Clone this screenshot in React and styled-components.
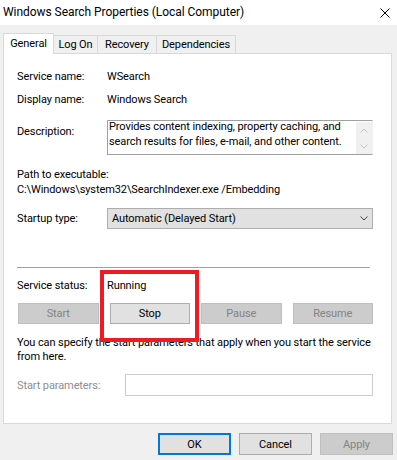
import React from "react";
import styled, { createGlobalStyle } from "styled-components";

const GlobalStyle = createGlobalStyle`
  html, body {
    margin: 0;
    padding: 0;
    background: #f0f0f0;
  }
  body {
    font-family: Roboto, "Noto Sans", "Liberation Sans", sans-serif;
    font-size: 11px;
    letter-spacing: -0.1px;
    color: #000;
  }
`;

const Dialog = styled.div`
  width: 397px;
  height: 460px;
  overflow: hidden;
  background: #f0f0f0;
  display: flex;
  flex-direction: column;
`;

const TitleBar = styled.div`
  height: 25px;
  flex: none;
  background: #fff;
  display: flex;
  align-items: center;
  justify-content: space-between;
  padding: 0 7px 0 3px;
  span {
    font-size: 12px;
    letter-spacing: -0.05px;
    padding-bottom: 1px;
  }
`;

const TabStrip = styled.div`
  margin-top: 8px;
  height: 20px;
  display: flex;
  align-items: flex-end;
  padding-left: 3px;
`;

const Tab = styled.div`
  box-sizing: border-box;
  width: ${p => p.$w}px;
  height: ${p => (p.$active ? 21 : 18)}px;
  margin-bottom: ${p => (p.$active ? -1 : 0)}px;
  margin-left: ${p => (p.$first ? 0 : -1)}px;
  border: 1px solid #d9d9d9;
  border-bottom: none;
  background: ${p => (p.$active ? "#fff" : "#f0f0f0")};
  display: flex;
  align-items: center;
  justify-content: center;
  padding-bottom: ${p => (p.$active ? 2 : 0)}px;
  position: relative;
  z-index: ${p => (p.$active ? 2 : 0)};
`;

const Panel = styled.div`
  box-sizing: border-box;
  margin: 0 5px 0 3px;
  height: 371px;
  border: 1px solid #d9d9d9;
  background: #fff;
  padding: 15px 18px 0 13px;
  position: relative;
  display: flex;
  flex-direction: column;
`;

const Row = styled.div`
  display: flex;
  align-items: ${p => p.$align || "center"};
  margin-top: ${p => p.$mt || 0}px;
  line-height: 15px;
`;

const Label = styled.div`
  width: ${p => p.$w || 90}px;
  flex: none;
  color: ${p => (p.$disabled ? "#8d8d8d" : "#000")};
  padding-top: ${p => p.$pt || 0}px;
`;

const TextLine = styled.div`
  line-height: 15px;
  margin-top: ${p => p.$mt || 0}px;
`;

const DescBox = styled.div`
  flex: 1;
  box-sizing: border-box;
  height: 35px;
  border: 1px solid #a0a0a0;
  border-right-color: #f0f0f0;
  display: flex;
`;

const DescText = styled.div`
  flex: 1;
  line-height: 14.5px;
  padding-left: 1px;
  margin-top: -1px;
`;

const ScrollBar = styled.div`
  width: 16px;
  margin-top: 1px;
  background: #f0f0f0;
  display: flex;
  flex-direction: column;
  align-items: center;
  justify-content: space-around;
`;

const Select = styled.div`
  flex: 1;
  box-sizing: border-box;
  height: 21px;
  background: #e1e1e1;
  border: 1px solid #adadad;
  display: flex;
  align-items: center;
  justify-content: space-between;
  padding: 0 4px 0 4px;
`;

const Separator = styled.div`
  margin-top: 38px;
  width: 353px;
  height: 1px;
  background: #a0a0a0;
`;

const ButtonGrid = styled.div`
  margin-top: 10px;
  padding-left: 1px;
  display: grid;
  grid-template-columns: repeat(4, 1fr);
  column-gap: 11px;
`;

const ServiceButton = styled.div`
  box-sizing: border-box;
  height: 21px;
  border: 1px solid ${p => (p.$disabled ? "#bfbfbf" : "#adadad")};
  background: ${p => (p.$disabled ? "#cccccc" : "#e1e1e1")};
  color: ${p => (p.$disabled ? "#838383" : "#000")};
  display: flex;
  align-items: center;
  justify-content: center;
`;

const Note = styled.div`
  margin-top: 12px;
  line-height: 14px;
  white-space: nowrap;
`;

const ParamInput = styled.div`
  flex: 1;
  box-sizing: border-box;
  height: 22px;
  border: 1px solid #cccccc;
  background: #fff;
`;

const Highlight = styled.div`
  position: absolute;
  left: 96px;
  top: 216px;
  width: 99px;
  height: 72px;
  box-sizing: border-box;
  border: 4px solid #ed1c24;
  pointer-events: none;
`;

const Footer = styled.div`
  margin-top: 9px;
  display: flex;
  justify-content: flex-end;
  gap: 8px;
  padding-right: 4px;
`;

const DialogButton = styled.div`
  box-sizing: border-box;
  width: 73px;
  height: 22px;
  border: ${p => (p.$default ? "2px solid #0078d7" : p.$disabled ? "1px solid #bfbfbf" : "1px solid #adadad")};
  background: ${p => (p.$disabled ? "#cccccc" : "#e1e1e1")};
  color: ${p => (p.$disabled ? "#838383" : "#000")};
  display: flex;
  align-items: center;
  justify-content: center;
`;

const Chevron = ({ up, color = "#404040", w = 8 }) => (
  <svg width={w} height="5" viewBox="0 0 8 5">
    <polyline
      points={up ? "0.5,4.5 4,1 7.5,4.5" : "0.5,0.5 4,4 7.5,0.5"}
      fill="none"
      stroke={color}
      strokeWidth="1"
    />
  </svg>
);

const CloseIcon = () => (
  <svg width="10" height="10" viewBox="0 0 10 10">
    <path d="M0.5 0.5 L9.5 9.5 M9.5 0.5 L0.5 9.5" stroke="#000" strokeWidth="1" />
  </svg>
);

export default function App() {
  return (
    <Dialog>
      <GlobalStyle />
      <TitleBar>
        <span>Windows Search Properties (Local Computer)</span>
        <CloseIcon />
      </TitleBar>
      <TabStrip>
        <Tab $w={51} $first $active>General</Tab>
        <Tab $w={45}>Log On</Tab>
        <Tab $w={60}>Recovery</Tab>
        <Tab $w={80}>Dependencies</Tab>
      </TabStrip>
      <Panel>
        <Row>
          <Label>Service name:</Label>
          <div>WSearch</div>
        </Row>
        <Row $mt={8}>
          <Label>Display name:</Label>
          <div>Windows Search</div>
        </Row>
        <Row $mt={13} $align="flex-start">
          <Label $pt={4}>Description:</Label>
          <DescBox>
            <DescText>
              Provides content indexing, property caching, and
              <br />
              search results for files, e-mail, and other content.
            </DescText>
            <ScrollBar>
              <Chevron up color="#c2c2c2" />
              <Chevron color="#c2c2c2" />
            </ScrollBar>
          </DescBox>
        </Row>
        <TextLine $mt={12}>Path to executable:</TextLine>
        <TextLine>C:\Windows\system32\SearchIndexer.exe /Embedding</TextLine>
        <Row $mt={11}>
          <Label>Startup type:</Label>
          <Select>
            <span>Automatic (Delayed Start)</span>
            <Chevron />
          </Select>
        </Row>
        <Separator />
        <Row $mt={10}>
          <Label>Service status:</Label>
          <div>Running</div>
        </Row>
        <ButtonGrid>
          <ServiceButton $disabled>Start</ServiceButton>
          <ServiceButton>Stop</ServiceButton>
          <ServiceButton $disabled>Pause</ServiceButton>
          <ServiceButton $disabled>Resume</ServiceButton>
        </ButtonGrid>
        <Note>
          You can specify the start parameters that apply when you start the service
          <br />
          from here.
        </Note>
        <Row $mt={10}>
          <Label $w={108} $disabled>Start parameters:</Label>
          <ParamInput />
        </Row>
        <Highlight />
      </Panel>
      <Footer>
        <DialogButton $default>OK</DialogButton>
        <DialogButton>Cancel</DialogButton>
        <DialogButton $disabled>Apply</DialogButton>
      </Footer>
    </Dialog>
  );
}
